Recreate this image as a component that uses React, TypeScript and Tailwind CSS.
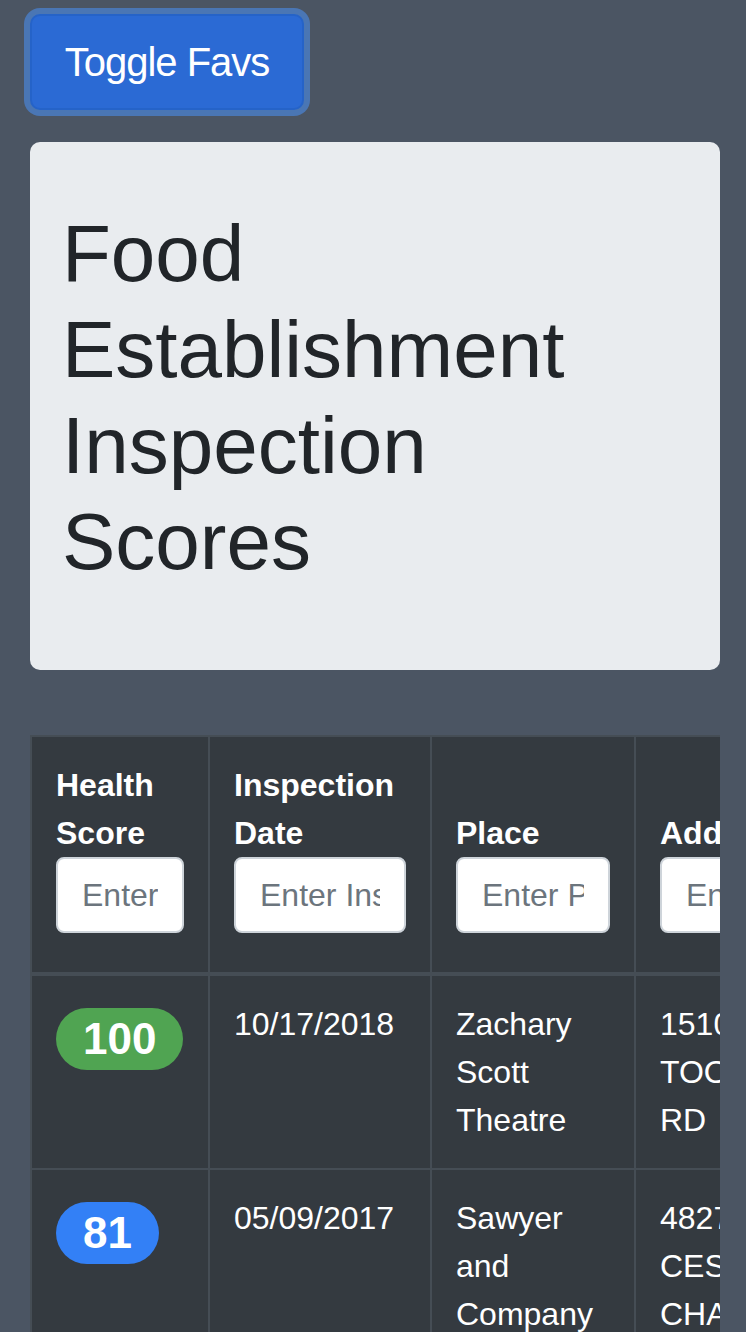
import React from "react";

const rows = [
  { score: 100, color: "bg-[#50a452]", date: "10/17/2018", place: "Zachary Scott Theatre", addr: "1510 TOOMEY RD" },
  { score: 81, color: "bg-[#3380f6]", date: "05/09/2017", place: "Sawyer and Company", addr: "4827 CESAR CHAVEZ ST" },
  { score: 95, color: "bg-[#50a452]", date: "03/12/2018", place: "Taco Deli", addr: "1500 SPYGLASS DR" },
];

const headers = [
  { label: "Health Score", ph: "Enter Health Score" },
  { label: "Inspection Date", ph: "Enter Inspection Date" },
  { label: "Place", ph: "Enter Place" },
  { label: "Address", ph: "Enter Address" },
  { label: "Fav", ph: "" },
];

export default function App() {
  return (
    <div className="h-[1332px] overflow-hidden bg-[#4b5563] pl-[30px] pr-[26px] pt-[14px] font-['Liberation_Sans',Arial,sans-serif]">
      <button className="block h-[96px] w-[274px] rounded-[10px] border-2 border-[#2563c8] bg-[#2b6ad4] text-[40px] leading-[60px] tracking-[-1px] text-white ring-[6px] ring-[#4a76b4]">
        Toggle Favs
      </button>
      <div className="mt-[32px] rounded-[10px] bg-[#e9ecef] px-[32px] py-[64px]">
        <h1 className="mb-[16px] max-w-[560px] text-[80px] font-medium leading-[96px] text-[#212529]">
          Food Establishment Inspection Scores
        </h1>
      </div>
      <div className="mt-[65px] w-[690px] overflow-hidden">
        <div className="grid w-[1000px] grid-cols-[178px_222px_204px_208px_188px] bg-[#343a40] text-[32px] leading-[48px] text-white">
          {headers.map((h) => (
            <div
              key={h.label}
              className="flex flex-col justify-end border-l-2 border-t-2 border-b-4 border-[#454d55] px-[24px] pt-[24px] pb-[39px]"
            >
              <div className="font-bold">{h.label}</div>
              {h.ph ? (
                <input
                  placeholder={h.ph}
                  className="block h-[76px] w-full rounded-[8px] border-2 border-[#ced4da] bg-white px-[24px] text-[32px] text-[#495057] placeholder:text-[#6c757d] outline-none"
                />
              ) : (
                <div className="h-[76px]" />
              )}
            </div>
          ))}
          {rows.map((r) => (
            <React.Fragment key={r.place}>
              <div className="border-l-2 border-b-2 border-[#454d55] p-[24px]">
                <span
                  className={`mt-[8px] inline-flex h-[62px] items-center rounded-full px-[27px] text-[44px] font-bold leading-none text-white ${r.color}`}
                >
                  {r.score}
                </span>
              </div>
              <div className="border-l-2 border-b-2 border-[#454d55] p-[24px]">{r.date}</div>
              <div className="border-l-2 border-b-2 border-[#454d55] p-[24px]">{r.place}</div>
              <div className="border-l-2 border-b-2 border-[#454d55] p-[24px]">{r.addr}</div>
              <div className="border-l-2 border-b-2 border-[#454d55] p-[24px]">☆</div>
            </React.Fragment>
          ))}
        </div>
      </div>
    </div>
  );
}
